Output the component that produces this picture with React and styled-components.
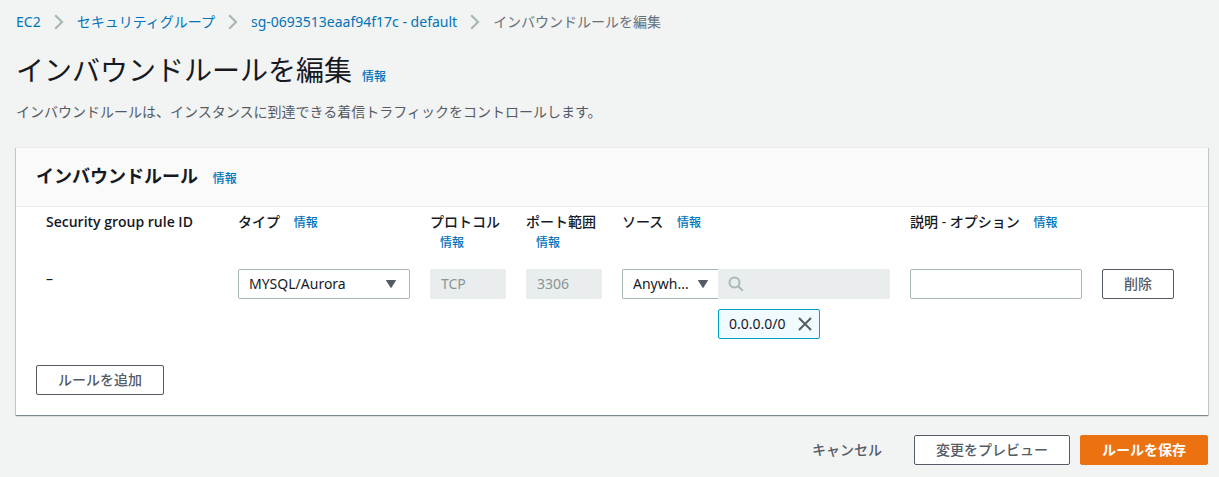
import React from "react";
import styled, { createGlobalStyle, css } from "styled-components";

const GlobalStyle = createGlobalStyle`
  *, *::before, *::after { box-sizing: border-box; }
  body {
    margin: 0;
    background: #f2f3f3;
    color: #16191f;
    font: 14px/20px "Noto Sans", "Noto Sans CJK JP", sans-serif;
  }
  button, input, select { font: inherit; color: inherit; }
`;

const Page = styled.div`
  padding: 12px 11px 12px 16px;
`;

const Crumbs = styled.ol`
  display: flex;
  flex-wrap: wrap;
  align-items: center;
  margin: 0;
  padding: 0;
  list-style: none;
`;

const Crumb = styled.li`
  display: flex;
  align-items: center;
  color: #687078;

  & > svg { margin: 0 13px; }
`;

const Link = styled.a`
  color: #0073bb;
  text-decoration: none;
`;

const InfoLink = styled(Link)`
  display: inline-block;
  margin-left: 10px;
  font-size: 12px;
  font-weight: 500;
`;

const TitleRow = styled.div`
  display: flex;
  align-items: baseline;
  margin-top: 20px;
`;

const Title = styled.h1`
  margin: 0;
  font-size: 28px;
  line-height: 36px;
  font-weight: 400;
`;

const Description = styled.p`
  margin: 14px 0 25px;
  color: #545b64;
`;

const Card = styled.section`
  background: #fff;
  border-top: 1px solid #eaeded;
  box-shadow: 0 1px 1px 0 rgba(0, 28, 36, 0.3), 1px 1px 1px 0 rgba(0, 28, 36, 0.15),
    -1px 1px 1px 0 rgba(0, 28, 36, 0.15);
`;

const CardHeader = styled.header`
  padding: 16px 20px 15px;
  background: #fafafa;
  border-bottom: 1px solid #eaeded;
`;

const CardTitle = styled.h2`
  margin: 0;
  font-size: 18px;
  line-height: 24px;
  font-weight: 700;
`;

const CardBody = styled.div`
  padding: 0 20px 20px;
`;

const RuleTable = styled.table`
  width: 100%;
  table-layout: fixed;
  border-collapse: collapse;
  margin-bottom: 26px;
`;

const Col = styled.col`
  width: calc(100% * ${(p) => p.$span} / 12);
`;

const HeadCell = styled.th`
  padding: 5px 10px 16px;
  text-align: left;
  vertical-align: top;
  font-family: "Open Sans", "Noto Sans CJK JP", sans-serif;
  font-weight: ${(p) => (p.$bold ? 600 : 500)};
`;

const Cell = styled.td`
  padding: 0 10px;
  vertical-align: top;
`;

const control = css`
  display: block;
  width: 100%;
  height: 30px;
  padding: 0 10px;
  background: #fff;
  border: 1px solid #aab7b8;
  border-radius: 2px;
  outline: none;
`;

const TextInput = styled.input`
  ${control}
  padding-bottom: 2px;

  &:disabled {
    background: #eaeded;
    border-color: #eaeded;
    color: #879596;
  }
`;

const SelectBox = styled.div`
  position: relative;
  flex: none;
  width: ${(p) => (p.$joined ? "96px" : "100%")};

  & > svg {
    position: absolute;
    top: 11px;
    right: ${(p) => (p.$joined ? "10px" : "14px")};
    pointer-events: none;
  }
`;

const Select = styled.select`
  ${control}
  appearance: none;
  ${(p) =>
    p.$joined &&
    css`
      border-right: 0;
      border-radius: 2px 0 0 2px;
      padding-right: 20px;
    `}
`;

const SourceRow = styled.div`
  display: flex;
`;

const SearchBox = styled.div`
  flex: 1;
  min-width: 0;
  display: flex;
  align-items: center;
  height: 30px;
  padding: 0 10px;
  background: #eaeded;
  border-radius: 0 2px 2px 0;

  & > svg { flex: none; }
`;

const SearchInput = styled.input`
  flex: 1;
  min-width: 0;
  border: 0;
  background: transparent;
`;

const Token = styled.div`
  display: flex;
  align-items: center;
  justify-content: space-between;
  width: 102px;
  height: 30px;
  margin: 10px 0 0 96px;
  padding: 0 7px 0 10px;
  background: #f1faff;
  border: 1px solid #00a1c9;
  border-radius: 2px;
`;

const TokenRemove = styled.button`
  display: flex;
  padding: 0;
  border: 0;
  background: none;
  cursor: pointer;
`;

const buttonColors = {
  normal: css`
    background: #fff;
    border-color: #545b64;
    color: #545b64;
  `,
  link: css`
    background: transparent;
    border-color: transparent;
    color: #545b64;
  `,
  primary: css`
    background: #ec7211;
    border-color: #ec7211;
    color: #fff;
    font-weight: 700;
  `,
};

const Button = styled.button`
  height: 30px;
  padding: 0 21px;
  border: 1px solid;
  border-radius: 2px;
  font-weight: 500;
  line-height: 20px;
  white-space: nowrap;
  cursor: pointer;
  ${(p) => buttonColors[p.$variant || "normal"]}
`;

const Footer = styled.footer`
  display: flex;
  justify-content: flex-end;
  gap: 10px;
  margin-top: 20px;
`;

const Chevron = () => (
  <svg width="10" height="16" viewBox="0 0 10 16" fill="none" stroke="#aab7b8" strokeWidth="2.2" aria-hidden="true">
    <path d="M1.2 1.2 8 8l-6.800 6.800" />
  </svg>
);

const Caret = () => (
  <svg width="10" height="8" viewBox="0 0 10 8" aria-hidden="true">
    <path d="M.5.5h9L5 7.500z" fill="#545b64" stroke="#545b64" strokeLinejoin="round" />
  </svg>
);

const SearchIcon = () => (
  <svg width="16" height="16" viewBox="0 0 16 16" fill="none" stroke="#aab7b8" strokeWidth="2" aria-hidden="true">
    <circle cx="6.500" cy="6.500" r="5" />
    <path d="m10 10 4.800 4.800" />
  </svg>
);

const CloseIcon = () => (
  <svg width="14" height="14" viewBox="0 0 14 14" fill="none" stroke="#545b64" strokeWidth="2" aria-hidden="true">
    <path d="m1 1 12 12M13 1 1 13" />
  </svg>
);

const Info = () => <InfoLink href="#info">情報</InfoLink>;

const columns = [
  { span: 2, text: "Security group rule ID", bold: true },
  { span: 2, text: "タイプ", field: "type", info: true },
  { span: 1, text: "プロトコル", field: "protocol", info: true },
  { span: 1, text: "ポート範囲", field: "port", info: true },
  { span: 3, text: "ソース", field: "source", info: true },
  { span: 2, text: "説明 - オプション", field: "description", info: true },
  { span: 1 },
];

export default function App() {
  return (
    <>
      <GlobalStyle />
      <Page>
        <nav>
          <Crumbs>
            <Crumb><Link href="#ec2">EC2</Link><Chevron /></Crumb>
            <Crumb><Link href="#groups">セキュリティグループ</Link><Chevron /></Crumb>
            <Crumb><Link href="#group">sg-0693513eaaf94f17c - default</Link><Chevron /></Crumb>
            <Crumb>インバウンドルールを編集</Crumb>
          </Crumbs>
        </nav>
        <main>
          <TitleRow>
            <Title>インバウンドルールを編集</Title>
            <Info />
          </TitleRow>
          <Description>
            インバウンドルールは、インスタンスに到達できる着信トラフィックをコントロールします。
          </Description>
          <Card>
            <CardHeader>
              <CardTitle>インバウンドルール <Info /></CardTitle>
            </CardHeader>
            <CardBody>
              <RuleTable>
                <colgroup>
                  {columns.map((c, i) => <Col key={i} $span={c.span} />)}
                </colgroup>
                <thead>
                  <tr>
                    {columns.map((c, i) => (
                      <HeadCell key={i} $bold={c.bold}>
                        {c.field ? <label htmlFor={c.field}>{c.text}</label> : c.text}
                        {c.info && <> <Info /></>}
                      </HeadCell>
                    ))}
                  </tr>
                </thead>
                <tbody>
                  <tr>
                    <Cell>–</Cell>
                    <Cell>
                      <SelectBox>
                        <Select id="type"><option>MYSQL/Aurora</option></Select>
                        <Caret />
                      </SelectBox>
                    </Cell>
                    <Cell><TextInput id="protocol" defaultValue="TCP" disabled /></Cell>
                    <Cell><TextInput id="port" defaultValue="3306" disabled /></Cell>
                    <Cell>
                      <SourceRow>
                        <SelectBox $joined>
                          <Select id="source" $joined><option>Anywh...</option></Select>
                          <Caret />
                        </SelectBox>
                        <SearchBox>
                          <SearchIcon />
                          <SearchInput aria-label="ソース" disabled />
                        </SearchBox>
                      </SourceRow>
                      <Token>
                        0.0.0.0/0
                        <TokenRemove type="button" aria-label="0.0.0.0/0 を削除"><CloseIcon /></TokenRemove>
                      </Token>
                    </Cell>
                    <Cell><TextInput id="description" /></Cell>
                    <Cell><Button type="button">削除</Button></Cell>
                  </tr>
                </tbody>
              </RuleTable>
              <Button type="button">ルールを追加</Button>
            </CardBody>
          </Card>
          <Footer>
            <Button type="button" $variant="link">キャンセル</Button>
            <Button type="button">変更をプレビュー</Button>
            <Button type="button" $variant="primary">ルールを保存</Button>
          </Footer>
        </main>
      </Page>
    </>
  );
}
